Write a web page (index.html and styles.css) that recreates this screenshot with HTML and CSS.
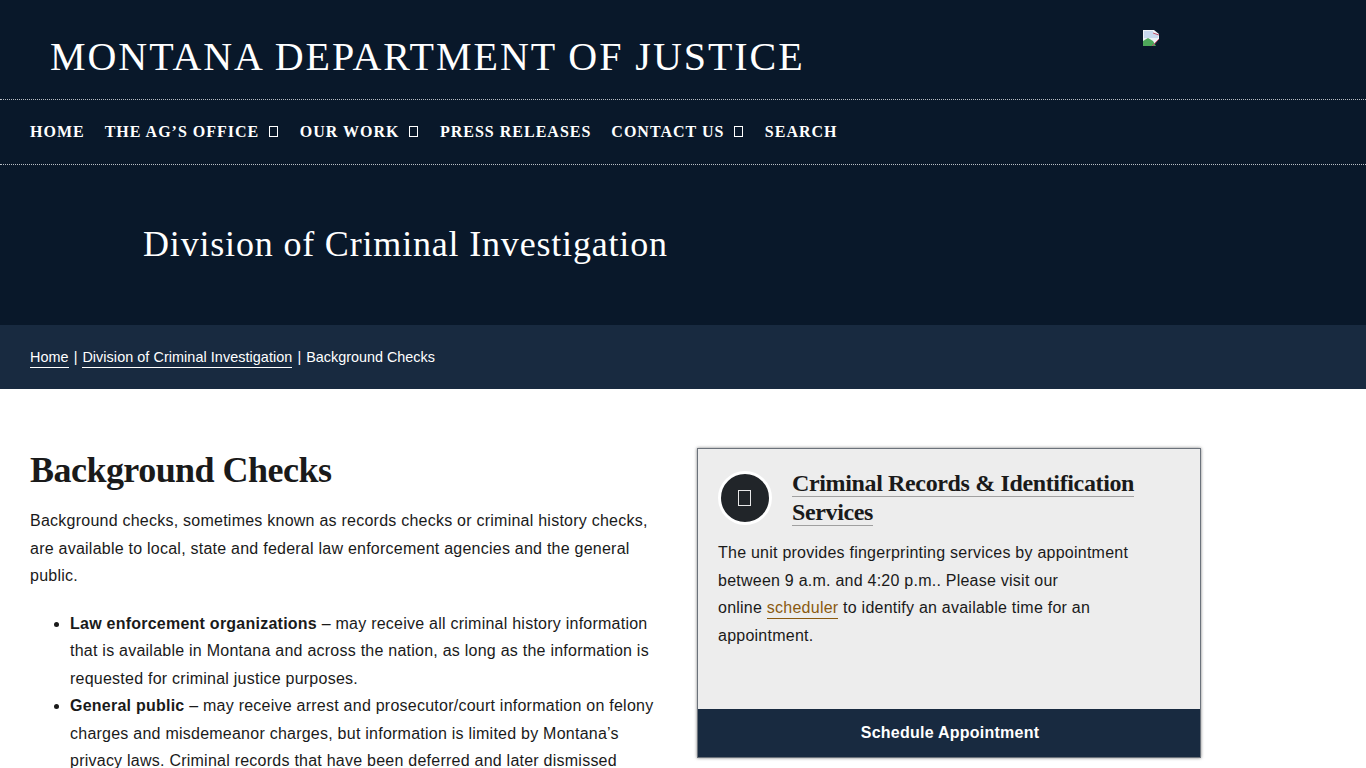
FILE: index.html
```html
<!DOCTYPE html>
<html lang="en">
<head>
  <meta charset="UTF-8">
  <meta name="viewport" content="width=device-width, initial-scale=1.0">
  <title>Background Checks</title>
  <link rel="stylesheet" href="styles.css">
</head>
<body>
  <header class="site-header">
    <div class="brand">
      <a class="site-title" href="#">MONTANA DEPARTMENT OF JUSTICE</a>
      <svg class="broken-img" width="16" height="16" viewBox="0 0 16 16" aria-hidden="true">
        <path d="M0 0h11l5 4v5l-6 7H0z" fill="#eef2f6"/>
        <path d="M1 1h9v3h5v4H1z" fill="#c9d8ee"/>
        <path d="M0 16v-5l5-3 5 3 3 5z" fill="#4ea85a"/>
        <path d="M10 3l6 2M9 16l7-7" stroke="#c0506b" stroke-width="1" fill="none"/>
      </svg>
    </div>
    <nav class="main-nav">
      <a href="#">Home</a>
      <a href="#">The AG’s Office <span class="tofu"></span></a>
      <a href="#">Our Work <span class="tofu"></span></a>
      <a href="#">Press Releases</a>
      <a href="#">Contact Us <span class="tofu"></span></a>
      <a href="#">Search</a>
    </nav>
  </header>

  <section class="hero">
    <h2>Division of Criminal Investigation</h2>
  </section>

  <div class="breadcrumb">
    <a href="#">Home</a><span class="sep">|</span><a href="#">Division of Criminal Investigation</a><span class="sep">|</span>Background Checks
  </div>

  <main class="content">
    <article class="copy">
      <h1>Background Checks</h1>
      <p>Background checks, sometimes known as records checks or criminal history checks, are available to local, state and federal law enforcement agencies and the general public.</p>
      <ul>
        <li><strong>Law enforcement organizations</strong> – may receive all criminal history information that is available in Montana and across the nation, as long as the information is requested for criminal justice purposes.</li>
        <li><strong>General public</strong> – may receive arrest and prosecutor/court information on felony charges and misdemeanor charges, but information is limited by Montana’s privacy laws. Criminal records that have been deferred and later dismissed</li>
      </ul>
    </article>

    <aside class="card">
      <div class="card-body">
        <div class="card-head">
          <span class="card-icon"><span class="tofu"></span></span>
          <h3><a href="#">Criminal Records &amp; Identification Services</a></h3>
        </div>
        <p>The unit provides fingerprinting services by appointment between 9 a.m. and 4:20 p.m.. Please visit our<br>online <a class="inline-link" href="#">scheduler</a> to identify an available time for an appointment.</p>
      </div>
      <a class="card-btn" href="#">Schedule Appointment</a>
    </aside>
  </main>
</body>
</html>
```

FILE: styles.css
```css
:root {
  --navy-dark: #09182a;
  --navy: #182a40;
  --text: #1a1a1a;
}

* {
  box-sizing: border-box;
}

html, body {
  height: 768px;
  overflow: hidden;
}

body {
  margin: 0;
  font-family: "Liberation Sans", Arial, sans-serif;
  font-size: 16px;
  line-height: 27.5px;
  letter-spacing: 0.24px;
  color: var(--text);
  background: #fff;
}

.site-header {
  background: var(--navy-dark);
}

.brand {
  height: 100px;
  padding: 0 50px;
  display: flex;
  justify-content: space-between;
  align-items: flex-start;
  border-bottom: 1px dotted #b8bdc4;
}

.site-title {
  margin-top: 33px;
  font-family: "Liberation Serif", "Times New Roman", serif;
  font-size: 40px;
  line-height: 48px;
  letter-spacing: 1.96px;
  color: #fff;
  text-decoration: none;
}

.broken-img {
  margin: 30px 157px 0 0;
}

.main-nav {
  height: 65px;
  padding: 0 30px;
  display: flex;
  align-items: center;
  gap: 20px;
  border-bottom: 1px dotted #b8bdc4;
}

.main-nav a {
  font-family: "Liberation Serif", "Times New Roman", serif;
  font-size: 16px;
  font-weight: bold;
  letter-spacing: 1px;
  text-transform: uppercase;
  color: #fff;
  text-decoration: none;
}

.tofu {
  display: inline-block;
  width: 9px;
  height: 11px;
  margin: 0 1.5px 0 5px;
  border: 1px solid #fff;
  vertical-align: 0;
}

.hero {
  height: 160px;
  padding-left: 143px;
  display: flex;
  align-items: center;
  background: var(--navy-dark);
}

.hero h2 {
  margin: 0;
  font-family: "Liberation Serif", "Times New Roman", serif;
  font-size: 36px;
  font-weight: normal;
  letter-spacing: 0.82px;
  color: #fff;
}

.breadcrumb {
  height: 64px;
  padding: 0 30px;
  font-size: 14.4px;
  line-height: 64px;
  letter-spacing: 0;
  color: #fff;
  background: var(--navy);
}

.breadcrumb a {
  padding-bottom: 2px;
  letter-spacing: 0.06px;
  color: #fff;
  text-decoration: none;
  border-bottom: 1px solid #fff;
}

.breadcrumb a + .sep {
  margin: 0 5px;
}

.content {
  display: flex;
  align-items: flex-start;
  padding: 59px 0 0 30px;
}

.copy {
  width: 630px;
  margin-right: 37px;
}

.copy h1 {
  margin: 0 0 15px;
  font-family: "Liberation Serif", "Times New Roman", serif;
  font-size: 36px;
  line-height: 44px;
  letter-spacing: -0.53px;
  color: var(--text);
}

.copy p {
  margin: 0 0 20px;
}

.copy ul {
  margin: 0;
  padding-left: 40px;
}

.card {
  width: 504px;
  height: 310px;
  display: flex;
  flex-direction: column;
  justify-content: space-between;
  background: #ededed;
  border: 1px solid #6b727b;
  box-shadow: 0 0 3px rgba(0, 0, 0, 0.5);
}

.card-body {
  padding: 20px 20px 0;
}

.card-head {
  display: flex;
  align-items: flex-start;
  gap: 20px;
  margin-bottom: 12px;
}

.card-icon {
  flex: none;
  width: 54px;
  height: 54px;
  margin-top: 2px;
  display: flex;
  align-items: center;
  justify-content: center;
  border: 3px solid #fff;
  border-radius: 50%;
  background: #212529;
}

.card-icon .tofu {
  width: 13px;
  height: 16px;
  margin: 0 1px 0 0;
  border-color: #e8e8e8;
}

.card-head h3 {
  margin: 0;
  font-family: "Liberation Serif", "Times New Roman", serif;
  font-size: 24px;
  line-height: 29px;
  letter-spacing: -0.36px;
}

.card-head h3 a {
  color: var(--text);
  text-decoration: none;
  border-bottom: 1px solid #a0a0a0;
}

.card p {
  margin: 0;
}

.inline-link {
  padding-bottom: 2px;
  color: #8a5a10;
  text-decoration: none;
  border-bottom: 1px solid #8a5a10;
}

.card-btn {
  height: 48px;
  padding-left: 2px;
  display: flex;
  align-items: center;
  justify-content: center;
  font-weight: bold;
  color: #fff;
  text-decoration: none;
  background: var(--navy);
}
```
